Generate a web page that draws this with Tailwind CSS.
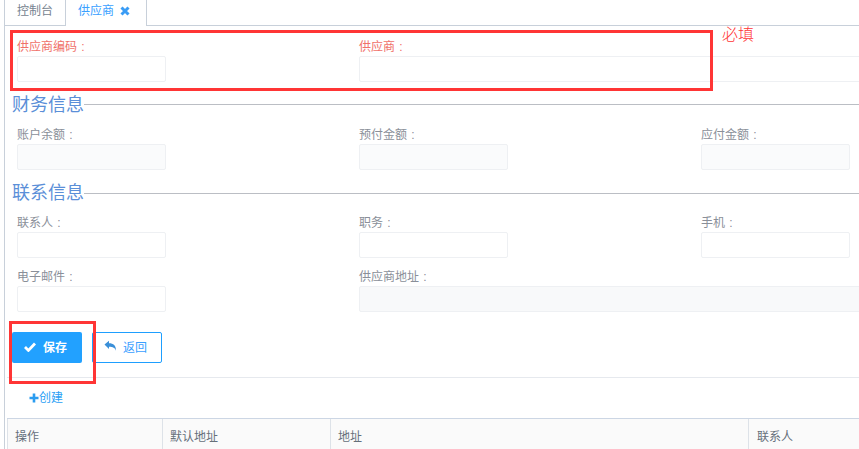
<!DOCTYPE html>
<html lang="zh-CN">
<head>
    <meta charset="UTF-8">
    <script src="https://cdn.jsdelivr.net/npm/@tailwindcss/browser@4"></script>
    <title>供应商</title>
</head>
<body class="bg-white overflow-hidden h-[449px] w-[859px] relative font-['Liberation_Sans','Noto_Sans_CJK_SC',sans-serif] text-[12px] text-[#8a8f99]">

    <!-- tabs -->
    <div class="flex h-[26px] ml-[4px] border-l border-b border-[#c8d0da]">
        <div class="w-[60px] pl-[12px] leading-[22px] text-[#76838f]">控制台</div>
        <div class="w-[82px] h-[26px] pl-[12px] leading-[22px] bg-white border-l border-r border-[#c8d0da] text-[#3aa0ff] flex gap-[6px]">
            <span>供应商</span>
            <svg class="mt-[6px]" width="10" height="10" viewBox="0 0 10 10"><path d="M1.5 1.5l7 7M8.5 1.5l-7 7" stroke="#3a9cf5" stroke-width="3"/></svg>
        </div>
    </div>

    <div class="ml-[4px] border-l border-[#c8d0da] h-[423px] overflow-hidden">
        <!-- required -->
        <div class="flex pl-[12px] pt-[14px] text-[#f0716a]">
            <div class="w-[342px] shrink-0">
                <div class="h-[16px] leading-[14px]">供应商编码<span class="inline-block w-[12px] text-center">:</span></div>
                <div class="w-[149px] h-[26px] border border-[#eef0f3] rounded-[2px]"></div>
            </div>
            <div class="flex-1">
                <div class="h-[16px] leading-[14px]">供应商<span class="inline-block w-[12px] text-center">:</span></div>
                <div class="w-[520px] h-[26px] border border-[#eef0f3] rounded-[2px]"></div>
            </div>
        </div>

        <!-- 财务信息 -->
        <div class="flex items-center pl-[7px] mt-[12px] h-[22px]">
            <span class="text-[18px] leading-[22px] text-[#5b8fd8]">财务信息</span>
            <div class="flex-1 h-px bg-[#bbbec4] -mt-[2px]"></div>
        </div>
        <div class="flex pl-[12px] pt-[12px]">
            <div class="w-[342px] shrink-0">
                <div class="h-[16px] leading-[14px]">账户余额<span class="inline-block w-[12px] text-center">:</span></div>
                <div class="w-[149px] h-[26px] border border-[#eef0f3] rounded-[2px] bg-[#fafbfc]"></div>
            </div>
            <div class="w-[342px] shrink-0">
                <div class="h-[16px] leading-[14px]">预付金额<span class="inline-block w-[12px] text-center">:</span></div>
                <div class="w-[149px] h-[26px] border border-[#eef0f3] rounded-[2px] bg-[#fafbfc]"></div>
            </div>
            <div class="w-[149px] shrink-0">
                <div class="h-[16px] leading-[14px]">应付金额<span class="inline-block w-[12px] text-center">:</span></div>
                <div class="w-[149px] h-[26px] border border-[#eef0f3] rounded-[2px] bg-[#fafbfc]"></div>
            </div>
        </div>

        <!-- 联系信息 -->
        <div class="flex items-center pl-[7px] mt-[12px] h-[22px]">
            <span class="text-[18px] leading-[22px] text-[#5b8fd8]">联系信息</span>
            <div class="flex-1 h-px bg-[#bbbec4]"></div>
        </div>
        <div class="flex pl-[12px] pt-[12px]">
            <div class="w-[342px] shrink-0">
                <div class="h-[16px] leading-[14px]">联系人<span class="inline-block w-[12px] text-center">:</span></div>
                <div class="w-[149px] h-[26px] border border-[#eef0f3] rounded-[2px]"></div>
            </div>
            <div class="w-[342px] shrink-0">
                <div class="h-[16px] leading-[14px]">职务<span class="inline-block w-[12px] text-center">:</span></div>
                <div class="w-[149px] h-[26px] border border-[#eef0f3] rounded-[2px]"></div>
            </div>
            <div class="w-[149px] shrink-0">
                <div class="h-[16px] leading-[14px]">手机<span class="inline-block w-[12px] text-center">:</span></div>
                <div class="w-[149px] h-[26px] border border-[#eef0f3] rounded-[2px]"></div>
            </div>
        </div>
        <div class="flex pl-[12px] pt-[12px]">
            <div class="w-[342px] shrink-0">
                <div class="h-[16px] leading-[14px]">电子邮件<span class="inline-block w-[12px] text-center">:</span></div>
                <div class="w-[149px] h-[26px] border border-[#eef0f3] rounded-[2px]"></div>
            </div>
            <div class="flex-1">
                <div class="h-[16px] leading-[14px]">供应商地址<span class="inline-block w-[12px] text-center">:</span></div>
                <div class="w-[520px] h-[26px] border border-[#eef0f3] rounded-[2px] bg-[#f8f9fa]"></div>
            </div>
        </div>

        <!-- buttons -->
        <div class="flex gap-[10px] pl-[7px] mt-[20px]">
            <div class="w-[70px] h-[31px] bg-[#22a1ff] rounded-[2px] flex items-center pl-[12px] gap-[7px] text-white font-bold">
                <svg class="-mt-[2px]" width="12" height="10" viewBox="0 0 12 10"><path d="M1 5l3.4 3.4L11 1.6" fill="none" stroke="#fff" stroke-width="2.8"/></svg>
                <span class="mt-[1px]">保存</span>
            </div>
            <div class="w-[70px] h-[31px] bg-white border border-[#1e9fff] rounded-[2px] flex items-center pl-[11px] gap-[6px] text-[#3aa0ff]">
                <svg class="-mt-[4px]" width="13" height="12" viewBox="0 0 13 12"><path d="M0.5 4.5L5 0.8v2.4c4.5 0 7 2.2 7 7.5-1-3-3-4-7-4v2.4z" fill="#3a8fd8"/></svg>
                <span>返回</span>
            </div>
        </div>

        <!-- address table -->
        <div class="mt-[14px] ml-[2px] border-t border-[#e6e9ee]">
            <div class="h-[40px] pl-[22px] flex items-center text-[#2aa0f5]">
                <svg width="10" height="10" viewBox="0 0 10 10"><path d="M5 0.5v9M0.5 5h9" stroke="#2a9cf0" stroke-width="2.6"/></svg>
                <span>创建</span>
            </div>
            <div class="flex h-[40px] border-t border-[#ccd6e4] bg-[#fafafa] text-[#66707a] leading-[36px]">
                <div class="w-[155px] shrink-0 pl-[7px] border-l border-[#dde2e8]">操作</div>
                <div class="w-[168px] shrink-0 pl-[7px] border-l border-[#dde2e8]">默认地址</div>
                <div class="w-[418px] shrink-0 pl-[7px] border-l border-[#dde2e8]">地址</div>
                <div class="flex-1 pl-[8px] border-l border-[#dde2e8]">联系人</div>
            </div>
        </div>
    </div>

    <!-- red annotations on the screenshot -->
    <div class="absolute left-[10px] top-[30px] w-[703px] h-[61px] border-[3px] border-[#ff3535]"></div>
    <div class="absolute left-[9px] top-[321px] w-[87px] h-[63px] border-[3px] border-[#ff3535]"></div>
    <div class="absolute left-[722px] top-[25px] text-[16px] leading-[20px] font-light text-[#ff3535]">必填</div>
</body>
</html>
